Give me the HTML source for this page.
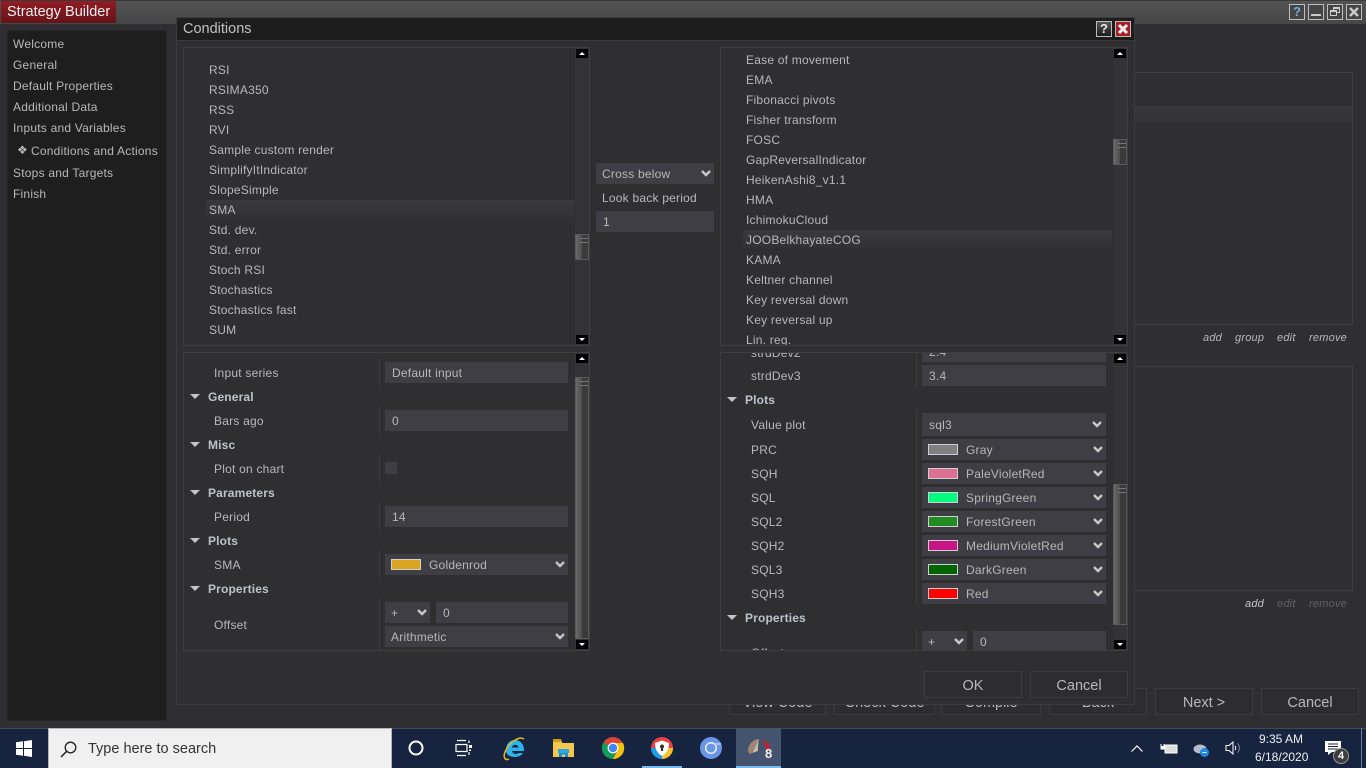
<!DOCTYPE html>
<html><head><meta charset="utf-8"><title>Strategy Builder</title>
<style>
html,body{margin:0;padding:0;width:1366px;height:768px;overflow:hidden;background:#2f2f31}
body{position:relative;font-family:"Liberation Sans",sans-serif;font-size:12px;color:#b8b8b8;letter-spacing:.22px}
div,span.a{position:absolute;box-sizing:border-box}
svg{position:absolute;overflow:visible}
.t{position:absolute;white-space:nowrap;line-height:20px;height:20px}
.b{font-weight:bold;color:#bcc3cc;letter-spacing:.15px}
.p{border:1px solid #3f3f41;background:#2f2f31}
.f{background:#3e3e44;color:#b8b8b8;line-height:23px;white-space:nowrap;height:21px}
.btn{border:1px solid #3c3c3e;background:#2d2d2f;color:#b8b8b8;text-align:center;font-size:14.5px;letter-spacing:0;line-height:28px;height:27px;overflow:hidden}
.sb{background:#333335}
.arr{background:#000;width:12px;height:9px}
.sep{background:#3d3d3f;width:1px}
.sw{border:1px solid #d0d0d0;width:30px;height:11px}
.hl{background:linear-gradient(#3a3a3c,#323234)}
.thumb{border:1px solid #5a5a5a;background:linear-gradient(90deg,#6a6a6a,#4c4c4c 50%,#3a3a3a 50%,#3a3a3a)}
.thumb::before{content:"";position:absolute;left:4px;top:3px;width:8px;height:5px;border-top:1px solid #777;border-bottom:1px solid #777;box-sizing:border-box}
.wb{width:16px;height:16px;border:1px solid #bdbdbd;background:#454545;color:#bdbdbd;text-align:center;font-weight:bold;line-height:14px;font-size:13px;letter-spacing:0}
</style></head><body>

<!-- main title -->
<div style="left:0;top:0;width:1366px;height:24px;background:linear-gradient(#535353,#474747);border-top:1px solid #3a3a3a"></div>
<div style="left:1px;top:1px;width:115px;height:22px;background:linear-gradient(#931c24,#65121a);color:#eee;font-size:14.5px;letter-spacing:0;line-height:23px;padding-left:6px;white-space:nowrap">Strategy Builder</div>
<div class="wb" style="left:1289px;top:4px;color:#7fa9d6">?</div>
<div class="wb" style="left:1308px;top:4px"><div style="left:2px;top:9px;width:10px;height:2px;background:#c8c8c8"></div></div>
<div class="wb" style="left:1327px;top:4px"><div style="left:5px;top:2px;width:7px;height:6px;border:1px solid #ccc;border-top-width:2px"></div><div style="left:2px;top:5px;width:7px;height:6px;border:1px solid #ccc;border-top-width:2px;background:#454545"></div></div>
<div class="wb" style="left:1346px;top:4px"><svg width="14" height="14" style="left:0;top:0"><path d="M3 3L11 11M11 3L3 11" stroke="#c8c8c8" stroke-width="2.6"/></svg></div>

<!-- sidebar -->
<div style="left:7px;top:30px;width:160px;height:691px;background:#1e1e1e;border:1px solid #262626"></div>
<span class="t" style="left:13px;top:34px">Welcome</span>
<span class="t" style="left:13px;top:55px">General</span>
<span class="t" style="left:13px;top:76px">Default Properties</span>
<span class="t" style="left:13px;top:97px">Additional Data</span>
<span class="t" style="left:13px;top:118px">Inputs and Variables</span>
<span class="t" style="left:17px;top:140px;font-size:12px">❖</span>
<span class="t" style="left:31px;top:141px">Conditions and Actions</span>
<span class="t" style="left:13px;top:163px">Stops and Targets</span>
<span class="t" style="left:13px;top:184px">Finish</span>

<!-- background panels -->
<div class="p" style="left:1100px;top:72px;width:253px;height:253px"></div>
<div style="left:1130px;top:106px;width:222px;height:16px;background:linear-gradient(#38383a,#343436)"></div>
<div class="p" style="left:1100px;top:366px;width:253px;height:225px"></div>
<i class="t" style="left:1203px;top:328px;font-size:11px">add</i>
<i class="t" style="left:1235px;top:328px;font-size:11px">group</i>
<i class="t" style="left:1277px;top:328px;font-size:11px">edit</i>
<i class="t" style="left:1309px;top:328px;font-size:11px">remove</i>
<i class="t" style="left:1245px;top:594px;font-size:11px;color:#c4c4c4">add</i>
<i class="t" style="left:1277px;top:594px;font-size:11px;color:#626264">edit</i>
<i class="t" style="left:1309px;top:594px;font-size:11px;color:#626264">remove</i>

<!-- background buttons -->
<div class="btn" style="left:729px;top:688px;width:97px">View Code</div>
<div class="btn" style="left:834px;top:688px;width:101px">Check Code</div>
<div class="btn" style="left:941px;top:688px;width:100px">Compile</div>
<div class="btn" style="left:1049px;top:688px;width:98px">Back</div>
<div class="btn" style="left:1155px;top:688px;width:98px">Next &gt;</div>
<div class="btn" style="left:1261px;top:688px;width:98px">Cancel</div>

<!-- dialog -->
<div style="left:176px;top:17px;width:959px;height:688px;background:#2f2f31;border:1px solid #3c3c3e"></div>
<div style="left:177px;top:18px;width:957px;height:23px;background:#1d1d1d;border-bottom:1px solid #3a3a3a;color:#c0c0c0;font-size:14.5px;letter-spacing:0;line-height:23px;padding-left:6px">Conditions</div>
<div class="wb" style="left:1096px;top:21px;background:linear-gradient(#555,#1c1c1c);color:#e8e8e8">?</div>
<div class="wb" style="left:1115px;top:21px;background:#a81e28"><svg width="14" height="14" style="left:0;top:0"><path d="M3 3L11 11M11 3L3 11" stroke="#f4f4f4" stroke-width="3"/></svg></div>

<!-- left top -->
<div class="p" style="left:183px;top:47px;width:407px;height:299px"></div>
<div class="hl" style="left:206px;top:200px;width:368px;height:18px"></div>
<span class="t" style="left:209px;top:60px">RSI</span>
<span class="t" style="left:209px;top:80px">RSIMA350</span>
<span class="t" style="left:209px;top:100px">RSS</span>
<span class="t" style="left:209px;top:120px">RVI</span>
<span class="t" style="left:209px;top:140px">Sample custom render</span>
<span class="t" style="left:209px;top:160px">SimplifyItIndicator</span>
<span class="t" style="left:209px;top:180px">SlopeSimple</span>
<span class="t" style="left:209px;top:200px">SMA</span>
<span class="t" style="left:209px;top:220px">Std. dev.</span>
<span class="t" style="left:209px;top:240px">Std. error</span>
<span class="t" style="left:209px;top:260px">Stoch RSI</span>
<span class="t" style="left:209px;top:280px">Stochastics</span>
<span class="t" style="left:209px;top:300px">Stochastics fast</span>
<span class="t" style="left:209px;top:320px">SUM</span>
<div class="sb" style="left:575px;top:48px;width:14px;height:297px"></div>
<div class="arr" style="left:576px;top:49px"><svg width="12" height="9"><path d="M6 3L9 6H3Z" fill="#fff"/></svg></div>
<div class="thumb" style="left:575px;top:234px;width:14px;height:26px"></div>
<div class="arr" style="left:576px;top:335px"><svg width="12" height="9"><path d="M6 6L9 3H3Z" fill="#fff"/></svg></div>

<!-- center -->
<div class="f" style="left:596px;top:163px;width:118px;padding-left:6px">Cross below<svg width="10" height="7" style="left:105px;top:7px"><path d="M1 1L5 5L9 1" fill="none" stroke="#c8c8c8" stroke-width="2.4"/></svg></div>
<span class="t" style="left:602px;top:188px">Look back period</span>
<div class="f" style="left:596px;top:211px;width:118px;padding-left:7px">1</div>

<!-- right top -->
<div class="p" style="left:720px;top:47px;width:408px;height:299px"></div>
<div class="hl" style="left:743px;top:230px;width:369px;height:18px"></div>
<span class="t" style="left:746px;top:50px">Ease of movement</span>
<span class="t" style="left:746px;top:70px">EMA</span>
<span class="t" style="left:746px;top:90px">Fibonacci pivots</span>
<span class="t" style="left:746px;top:110px">Fisher transform</span>
<span class="t" style="left:746px;top:130px">FOSC</span>
<span class="t" style="left:746px;top:150px">GapReversalIndicator</span>
<span class="t" style="left:746px;top:170px">HeikenAshi8_v1.1</span>
<span class="t" style="left:746px;top:190px">HMA</span>
<span class="t" style="left:746px;top:210px">IchimokuCloud</span>
<span class="t" style="left:746px;top:230px">JOOBelkhayateCOG</span>
<span class="t" style="left:746px;top:250px">KAMA</span>
<span class="t" style="left:746px;top:270px">Keltner channel</span>
<span class="t" style="left:746px;top:290px">Key reversal down</span>
<span class="t" style="left:746px;top:310px">Key reversal up</span>
<div style="left:721px;top:330px;width:390px;height:15px;overflow:hidden"><span class="t" style="left:25px;top:0">Lin. reg.</span></div>
<div class="sb" style="left:1113px;top:48px;width:14px;height:297px"></div>
<div class="arr" style="left:1114px;top:49px"><svg width="12" height="9"><path d="M6 3L9 6H3Z" fill="#fff"/></svg></div>
<div class="thumb" style="left:1113px;top:139px;width:14px;height:26px"></div>
<div class="arr" style="left:1114px;top:335px"><svg width="12" height="9"><path d="M6 6L9 3H3Z" fill="#fff"/></svg></div>

<!-- left bottom -->
<div class="p" style="left:183px;top:352px;width:407px;height:299px"></div>
<div class="sep" style="left:379px;top:359px;height:27px"></div>
<div class="sep" style="left:379px;top:407px;height:27px"></div>
<div class="sep" style="left:379px;top:455px;height:27px"></div>
<div class="sep" style="left:379px;top:503px;height:27px"></div>
<div class="sep" style="left:379px;top:551px;height:27px"></div>
<div class="sep" style="left:379px;top:599px;height:51px"></div>
<span class="t" style="left:214px;top:363px">Input series</span>
<div class="f" style="left:385px;top:362px;width:183px;padding-left:7px">Default input</div>
<svg width="10" height="6" style="left:190px;top:394px"><path d="M0 0H10L5 5Z" fill="#c4c4c4"/></svg>
<span class="t b" style="left:208px;top:387px">General</span>
<span class="t" style="left:214px;top:411px">Bars ago</span>
<div class="f" style="left:385px;top:410px;width:183px;padding-left:7px">0</div>
<svg width="10" height="6" style="left:190px;top:442px"><path d="M0 0H10L5 5Z" fill="#c4c4c4"/></svg>
<span class="t b" style="left:208px;top:435px">Misc</span>
<span class="t" style="left:214px;top:459px">Plot on chart</span>
<div style="left:385px;top:462px;width:12px;height:12px;background:#3e3e44"></div>
<svg width="10" height="6" style="left:190px;top:490px"><path d="M0 0H10L5 5Z" fill="#c4c4c4"/></svg>
<span class="t b" style="left:208px;top:483px">Parameters</span>
<span class="t" style="left:214px;top:507px">Period</span>
<div class="f" style="left:385px;top:506px;width:183px;padding-left:7px">14</div>
<svg width="10" height="6" style="left:190px;top:538px"><path d="M0 0H10L5 5Z" fill="#c4c4c4"/></svg>
<span class="t b" style="left:208px;top:531px">Plots</span>
<span class="t" style="left:214px;top:555px">SMA</span>
<div class="f" style="left:385px;top:554px;width:183px;padding-left:44px">Goldenrod<div class="sw" style="left:6px;top:5px;background:#daa520"></div><svg width="10" height="7" style="left:170px;top:7px"><path d="M1 1L5 5L9 1" fill="none" stroke="#c8c8c8" stroke-width="2.4"/></svg></div>
<svg width="10" height="6" style="left:190px;top:586px"><path d="M0 0H10L5 5Z" fill="#c4c4c4"/></svg>
<span class="t b" style="left:208px;top:579px">Properties</span>
<span class="t" style="left:214px;top:615px">Offset</span>
<div class="f" style="left:385px;top:602px;width:45px;padding-left:6px">+<svg width="10" height="7" style="left:32px;top:7px"><path d="M1 1L5 5L9 1" fill="none" stroke="#c8c8c8" stroke-width="2.4"/></svg></div>
<div class="f" style="left:436px;top:602px;width:132px;padding-left:7px">0</div>
<div class="f" style="left:385px;top:626px;width:183px;padding-left:6px">Arithmetic<svg width="10" height="7" style="left:170px;top:7px"><path d="M1 1L5 5L9 1" fill="none" stroke="#c8c8c8" stroke-width="2.4"/></svg></div>
<div class="sb" style="left:575px;top:353px;width:14px;height:297px"></div>
<div class="arr" style="left:576px;top:354px"><svg width="12" height="9"><path d="M6 3L9 6H3Z" fill="#fff"/></svg></div>
<div class="thumb" style="left:575px;top:377px;width:14px;height:262px"></div>
<div class="arr" style="left:576px;top:640px"><svg width="12" height="9"><path d="M6 6L9 3H3Z" fill="#fff"/></svg></div>

<!-- right bottom -->
<div class="p" style="left:720px;top:352px;width:408px;height:299px"></div>
<div style="left:721px;top:353px;width:392px;height:297px;overflow:hidden">
<div class="sep" style="left:195px;top:0;height:35px"></div>
<div class="sep" style="left:195px;top:57px;height:195px"></div>
<div class="sep" style="left:195px;top:276px;height:30px"></div>
<span class="t" style="left:30px;top:-10px">strdDev2</span>
<div class="f" style="left:201px;top:-12px;width:184px;padding-left:7px">2.4</div>
</div>
<span class="t" style="left:751px;top:366px">strdDev3</span>
<div class="f" style="left:922px;top:365px;width:184px;padding-left:7px">3.4</div>
<svg width="10" height="6" style="left:727px;top:397px"><path d="M0 0H10L5 5Z" fill="#c4c4c4"/></svg>
<span class="t b" style="left:745px;top:390px">Plots</span>
<span class="t" style="left:751px;top:415px">Value plot</span>
<div class="f" style="left:922px;top:413px;width:184px;height:23px;line-height:24px;padding-left:7px">sql3<svg width="10" height="7" style="left:170px;top:8px"><path d="M1 1L5 5L9 1" fill="none" stroke="#c8c8c8" stroke-width="2.4"/></svg></div>
<span class="t" style="left:751px;top:440px">PRC</span>
<div class="f" style="left:922px;top:439px;width:184px;padding-left:44px">Gray<div class="sw" style="left:6px;top:5px;background:#808080"></div><svg width="10" height="7" style="left:171px;top:7px"><path d="M1 1L5 5L9 1" fill="none" stroke="#c8c8c8" stroke-width="2.4"/></svg></div>
<span class="t" style="left:751px;top:464px">SQH</span>
<div class="f" style="left:922px;top:463px;width:184px;padding-left:44px">PaleVioletRed<div class="sw" style="left:6px;top:5px;background:#db7093"></div><svg width="10" height="7" style="left:171px;top:7px"><path d="M1 1L5 5L9 1" fill="none" stroke="#c8c8c8" stroke-width="2.4"/></svg></div>
<span class="t" style="left:751px;top:488px">SQL</span>
<div class="f" style="left:922px;top:487px;width:184px;padding-left:44px">SpringGreen<div class="sw" style="left:6px;top:5px;background:#00ff7f"></div><svg width="10" height="7" style="left:171px;top:7px"><path d="M1 1L5 5L9 1" fill="none" stroke="#c8c8c8" stroke-width="2.4"/></svg></div>
<span class="t" style="left:751px;top:512px">SQL2</span>
<div class="f" style="left:922px;top:511px;width:184px;padding-left:44px">ForestGreen<div class="sw" style="left:6px;top:5px;background:#228b22"></div><svg width="10" height="7" style="left:171px;top:7px"><path d="M1 1L5 5L9 1" fill="none" stroke="#c8c8c8" stroke-width="2.4"/></svg></div>
<span class="t" style="left:751px;top:536px">SQH2</span>
<div class="f" style="left:922px;top:535px;width:184px;padding-left:44px">MediumVioletRed<div class="sw" style="left:6px;top:5px;background:#c71585"></div><svg width="10" height="7" style="left:171px;top:7px"><path d="M1 1L5 5L9 1" fill="none" stroke="#c8c8c8" stroke-width="2.4"/></svg></div>
<span class="t" style="left:751px;top:560px">SQL3</span>
<div class="f" style="left:922px;top:559px;width:184px;padding-left:44px">DarkGreen<div class="sw" style="left:6px;top:5px;background:#006400"></div><svg width="10" height="7" style="left:171px;top:7px"><path d="M1 1L5 5L9 1" fill="none" stroke="#c8c8c8" stroke-width="2.4"/></svg></div>
<span class="t" style="left:751px;top:584px">SQH3</span>
<div class="f" style="left:922px;top:583px;width:184px;padding-left:44px">Red<div class="sw" style="left:6px;top:5px;background:#ff0000"></div><svg width="10" height="7" style="left:171px;top:7px"><path d="M1 1L5 5L9 1" fill="none" stroke="#c8c8c8" stroke-width="2.4"/></svg></div>
<svg width="10" height="6" style="left:727px;top:615px"><path d="M0 0H10L5 5Z" fill="#c4c4c4"/></svg>
<span class="t b" style="left:745px;top:608px">Properties</span>
<div style="left:721px;top:631px;width:392px;height:19px;overflow:hidden">
<span class="t" style="left:30px;top:12px">Offset</span>
<div class="f" style="left:201px;top:0;width:45px;padding-left:6px">+<svg width="10" height="7" style="left:32px;top:7px"><path d="M1 1L5 5L9 1" fill="none" stroke="#c8c8c8" stroke-width="2.4"/></svg></div>
<div class="f" style="left:252px;top:0;width:133px;padding-left:7px">0</div>
</div>
<div class="sb" style="left:1113px;top:353px;width:14px;height:297px"></div>
<div class="arr" style="left:1114px;top:354px"><svg width="12" height="9"><path d="M6 3L9 6H3Z" fill="#fff"/></svg></div>
<div class="thumb" style="left:1113px;top:484px;width:14px;height:141px"></div>
<div class="arr" style="left:1114px;top:640px"><svg width="12" height="9"><path d="M6 6L9 3H3Z" fill="#fff"/></svg></div>

<div class="btn" style="left:924px;top:671px;width:98px">OK</div>
<div class="btn" style="left:1030px;top:671px;width:98px">Cancel</div>

<!-- taskbar -->
<div style="left:0;top:728px;width:1366px;height:40px;background:#162440;border-top:1px solid #3d4a5e"></div>
<svg width="17" height="17" style="left:16px;top:740px"><path d="M0 2.3L7 1.3V8H0ZM8 1.2L16 0V8H8ZM0 9H7V15.7L0 14.7ZM8 9H16V17L8 15.8Z" fill="#fff"/></svg>
<div style="left:48px;top:728px;width:344px;height:40px;background:#f0f0f0;border:1px solid #b4b4b4;border-bottom:none"></div>
<svg width="18" height="18" style="left:60px;top:741px"><circle cx="10.5" cy="6.5" r="5.3" fill="none" stroke="#222" stroke-width="1.3"/><path d="M6.6 10.4L1 16" stroke="#222" stroke-width="1.5"/></svg>
<span class="t" style="left:88px;top:739px;font-size:14.5px;letter-spacing:0;color:#333">Type here to search</span>
<svg width="16" height="16" style="left:408px;top:740px"><circle cx="8" cy="8" r="6.5" fill="none" stroke="#fff" stroke-width="2"/></svg>
<svg width="18" height="16" style="left:455px;top:740px"><path d="M2 .5H11M2 15.5H11M1 4.5H12V11.5H1Z" fill="none" stroke="#fff" stroke-width="1.2"/><path d="M14 .5V3M14 12V15" stroke="#fff" stroke-width="1.2"/><rect x="14" y="5" width="3" height="3" fill="#fff"/><rect x="14" y="9.5" width="2" height="1.5" fill="#fff"/></svg>
<svg width="24" height="24" style="left:503px;top:736px"><path d="M12 4C6 4 3 9 3 14C3 19 7 21 11.500 21C15 21 18 20 20 17H15.500C14 18.500 10 18.500 9 15H21C21.500 8 17 4 12 4ZM9 11.500C9.500 8 15 8 15.500 11.500Z" fill="#2bb3ea"/><path d="M21 3C16 0 6 6 2 16C0 21 2 25 6 23" fill="none" stroke="#e8b923" stroke-width="1.5"/></svg>
<svg width="22" height="19" style="left:553px;top:739px"><path d="M0 2H9V4H21V18H0Z" fill="#f2c94c"/><path d="M0 0H8L9 3H0Z" fill="#d19b14"/><path d="M6 18V13H15V18H12V15.500H9V18Z" fill="#1a8fd8"/><rect x="5" y="10" width="11" height="4" fill="#2ea3e8"/></svg>
<svg width="24" height="24" style="left:601px;top:736px"><circle cx="12" cy="12" r="11" fill="#db4437"/><path d="M12 12L2.500 6.500A11 11 0 0 0 12 23L17 12Z" fill="#0f9d58"/><path d="M12 7H22A11 11 0 0 1 12 23L17 14Z" fill="#f4c20d"/><circle cx="12" cy="12" r="5.400" fill="#fff"/><circle cx="12" cy="12" r="4.200" fill="#4285f4"/></svg>
<svg width="24" height="24" style="left:650px;top:736px"><circle cx="12" cy="12" r="11" fill="#e9413f"/><path d="M12 23A11 11 0 0 1 1 12H12Z" fill="#1d9be8"/><path d="M12 23A11 11 0 0 0 23 12H12Z" fill="#f6c32d"/><path d="M12 4.500L19 7C19 14 16 18 12 20C8 18 5 14 5 7Z" fill="#fff"/><circle cx="12" cy="10.500" r="2" fill="#333"/><rect x="11" y="11" width="2" height="4" fill="#333"/></svg>
<svg width="24" height="24" style="left:699px;top:736px"><circle cx="12" cy="12" r="11" fill="#6a96e8"/><circle cx="12" cy="12" r="5.300" fill="none" stroke="#e8eefb" stroke-width="1.500"/><path d="M16 8L22 8" stroke="#a5c0f2" stroke-width="2"/></svg>
<div style="left:736px;top:728px;width:45px;height:40px;background:#45546e"></div>
<svg width="24" height="22" style="left:748px;top:737px"><path d="M0 13C1 5 7 2 11 2L3 17C1 17 0 15 0 13Z" fill="#a08672"/><path d="M11 2C10 7 10 11 10 14L4 16Z" fill="#c9b8a8"/><path d="M14 2L22 8L20 15L17 9Z" fill="#c2232b"/></svg>
<span class="t" style="left:765px;top:744px;font-size:13px;font-weight:bold;color:#f2f2f2;letter-spacing:0">8</span>
<div style="left:642px;top:766px;width:40px;height:2px;background:#76b9ed"></div>
<div style="left:736px;top:766px;width:45px;height:2px;background:#76b9ed"></div>
<svg width="12" height="7" style="left:1131px;top:745px"><path d="M.5 6.500L6 1L11.500 6.500" fill="none" stroke="#fff" stroke-width="1.200"/></svg>
<svg width="17" height="12" style="left:1161px;top:743px"><rect x="4" y="2" width="12" height="8" fill="#ddd" stroke="#fff"/><path d="M0 1V3M3 1V3M0 3.500H3V6H0Z" stroke="#fff" fill="#fff"/></svg>
<svg width="17" height="14" style="left:1193px;top:743px"><ellipse cx="7" cy="6" rx="6.500" ry="4.500" fill="#b8bdc5"/><circle cx="11.500" cy="9.500" r="4.500" fill="#1e88e5"/><path d="M9.500 9.500H13.500" stroke="#fff"/></svg>
<svg width="16" height="14" style="left:1225px;top:741px"><path d="M1 4.500H4L8 1V13L4 9.500H1Z" fill="none" stroke="#fff"/><path d="M10 5C11 6 11 8 10 9" fill="none" stroke="#fff"/><path d="M12.500 2.500C15 5 15 9 12.500 11.500" fill="none" stroke="#7d8796"/></svg>
<span class="t" style="left:1259px;top:729px;font-size:12px;letter-spacing:0;color:#f0f0f0">9:35 AM</span>
<span class="t" style="left:1255px;top:747px;font-size:12px;letter-spacing:0;color:#f0f0f0">6/18/2020</span>
<svg width="16" height="14" style="left:1325px;top:741px"><path d="M0 0H16V11H7L3 14V11H0Z" fill="#fff"/><path d="M3 3H13M3 5.500H13M3 8H13" stroke="#162440"/></svg>
<div style="left:1333px;top:748px;width:16px;height:16px;border-radius:50%;background:#3c3c3c;border:1px solid #999;color:#fff;font-weight:bold;font-size:11px;line-height:14px;letter-spacing:0;text-align:center">4</div>
<div style="left:1361px;top:728px;width:1px;height:40px;background:#6f7b8e"></div>
</body></html>
